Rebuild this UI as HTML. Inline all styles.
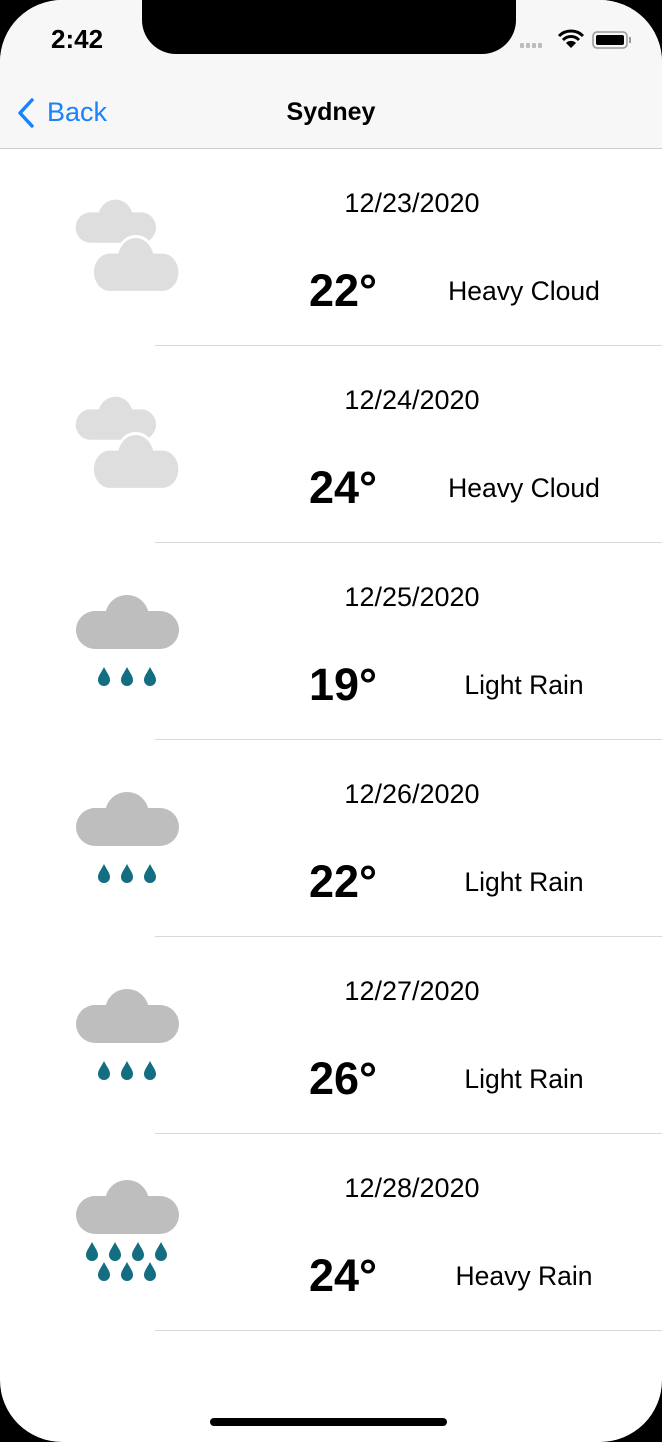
<!DOCTYPE html>
<html><head><meta charset="utf-8"><style>
html,body{margin:0;padding:0;background:#000;}
body{width:662px;height:1442px;position:relative;overflow:hidden;font-family:"Liberation Sans",sans-serif;}
.screen{position:absolute;left:0;top:0;width:662px;height:1442px;background:#fff;border-radius:62px;overflow:hidden;}
.nav{position:absolute;left:0;top:0;width:662px;height:148px;background:#f7f7f7;border-bottom:1px solid #cfcfcf;}
.notch{position:absolute;left:142px;top:-2px;width:374px;height:56px;background:#000;border-radius:0 0 34px 34px;}
.time{position:absolute;left:51px;top:24px;font-size:26px;font-weight:bold;color:#000;}
.title{position:absolute;left:0;width:662px;top:98px;text-align:center;font-size:25px;font-weight:bold;}
.back{position:absolute;left:47px;top:97px;font-size:27px;color:#1a82fb;}
.row{position:absolute;left:0;width:662px;height:197px;}
.sep{position:absolute;left:155px;right:0;bottom:0;height:1px;background:#d8d8d8;}
.date{position:absolute;left:292px;width:240px;text-align:center;top:39px;font-size:27px;}
.temp{position:absolute;left:263px;width:160px;text-align:center;top:116px;font-size:45px;font-weight:bold;}
.desc{position:absolute;left:404px;width:240px;text-align:center;top:127px;font-size:26.5px;}
.icon{position:absolute;left:70px;top:40px;}
.home{position:absolute;left:210px;top:1418px;width:237px;height:8px;border-radius:4px;background:#000;}
</style></head><body>
<svg width="0" height="0" style="position:absolute">
<defs>
<g id="cl"><circle cx="25" cy="32" r="14"/><circle cx="57" cy="24" r="22"/><rect x="6" y="18" width="103" height="38" rx="19"/></g>
<path id="dr" d="M0 -10 C3 -4 6 -1 6 3 A6 6 0 0 1 -6 3 C-6 -1 -3 -4 0 -10Z"/>
</defs></svg>
<div class="screen">
<div class="nav">
<div class="notch"></div>
<div class="time">2:42</div>
<svg style="position:absolute;left:520px;top:40px" width="115" height="12"><g fill="#bdbdbd"><rect x="0" y="3" width="4" height="5" rx="1"/><rect x="6" y="3" width="4" height="5" rx="1"/><rect x="12" y="3" width="4" height="5" rx="1"/><rect x="18" y="3" width="4" height="5" rx="1"/></g></svg>
<svg style="position:absolute;left:557px;top:29px" width="80" height="22"><path d="M2 7 A17 17 0 0 1 26 7" stroke="#000" stroke-width="3" fill="none"/><path d="M6 11 A11 11 0 0 1 22 11" stroke="#000" stroke-width="3" fill="none"/><path d="M14 19 L9 14 A7 7 0 0 1 19 14Z" fill="#000"/><rect x="36" y="3" width="34" height="16" rx="4" fill="none" stroke="#999" stroke-width="1.5"/><rect x="39" y="6" width="28" height="10" rx="2" fill="#000"/><rect x="72" y="8" width="2" height="6" fill="#999"/></svg>
<svg style="position:absolute;left:16px;top:97px" width="20" height="32"><path d="M16 3 L4 16 L16 29" stroke="#1a82fb" stroke-width="3.5" fill="none" stroke-linecap="round" stroke-linejoin="round"/></svg>
<div class="back">Back</div>
<div class="title">Sydney</div>
</div>

<div class="row" style="top:149px"><svg class="icon" width="120" height="110" style="top:48px;left:70px"><use href="#cl" fill="#dedede" transform="translate(1,1) scale(0.78,0.8)"/><use href="#cl" fill="#fff" stroke="#fff" stroke-width="6" transform="translate(19,39) scale(0.82,0.98)"/><use href="#cl" fill="#dedede" transform="translate(19,39) scale(0.82,0.98)"/></svg><div class="date">12/23/2020</div><div class="temp">22°</div><div class="desc">Heavy Cloud</div><div class="sep"></div></div>
<div class="row" style="top:346px"><svg class="icon" width="120" height="110" style="top:48px;left:70px"><use href="#cl" fill="#dedede" transform="translate(1,1) scale(0.78,0.8)"/><use href="#cl" fill="#fff" stroke="#fff" stroke-width="6" transform="translate(19,39) scale(0.82,0.98)"/><use href="#cl" fill="#dedede" transform="translate(19,39) scale(0.82,0.98)"/></svg><div class="date">12/24/2020</div><div class="temp">24°</div><div class="desc">Heavy Cloud</div><div class="sep"></div></div>
<div class="row" style="top:543px"><svg class="icon" width="120" height="100" style="top:50px;left:70px"><use href="#cl" fill="#bebebe"/><g fill="#126e80"><use href="#dr" x="34" y="84"/><use href="#dr" x="57" y="84"/><use href="#dr" x="80" y="84"/></g></svg><div class="date">12/25/2020</div><div class="temp">19°</div><div class="desc">Light Rain</div><div class="sep"></div></div>
<div class="row" style="top:740px"><svg class="icon" width="120" height="100" style="top:50px;left:70px"><use href="#cl" fill="#bebebe"/><g fill="#126e80"><use href="#dr" x="34" y="84"/><use href="#dr" x="57" y="84"/><use href="#dr" x="80" y="84"/></g></svg><div class="date">12/26/2020</div><div class="temp">22°</div><div class="desc">Light Rain</div><div class="sep"></div></div>
<div class="row" style="top:937px"><svg class="icon" width="120" height="100" style="top:50px;left:70px"><use href="#cl" fill="#bebebe"/><g fill="#126e80"><use href="#dr" x="34" y="84"/><use href="#dr" x="57" y="84"/><use href="#dr" x="80" y="84"/></g></svg><div class="date">12/27/2020</div><div class="temp">26°</div><div class="desc">Light Rain</div><div class="sep"></div></div>
<div class="row" style="top:1134px"><svg class="icon" width="120" height="110" style="top:44px;left:70px"><use href="#cl" fill="#bebebe"/><g fill="#126e80"><use href="#dr" x="22" y="74"/><use href="#dr" x="45" y="74"/><use href="#dr" x="68" y="74"/><use href="#dr" x="91" y="74"/><use href="#dr" x="34" y="94"/><use href="#dr" x="57" y="94"/><use href="#dr" x="80" y="94"/></g></svg><div class="date">12/28/2020</div><div class="temp">24°</div><div class="desc">Heavy Rain</div><div class="sep"></div></div>

<div class="home"></div>
</div>
</body></html>
